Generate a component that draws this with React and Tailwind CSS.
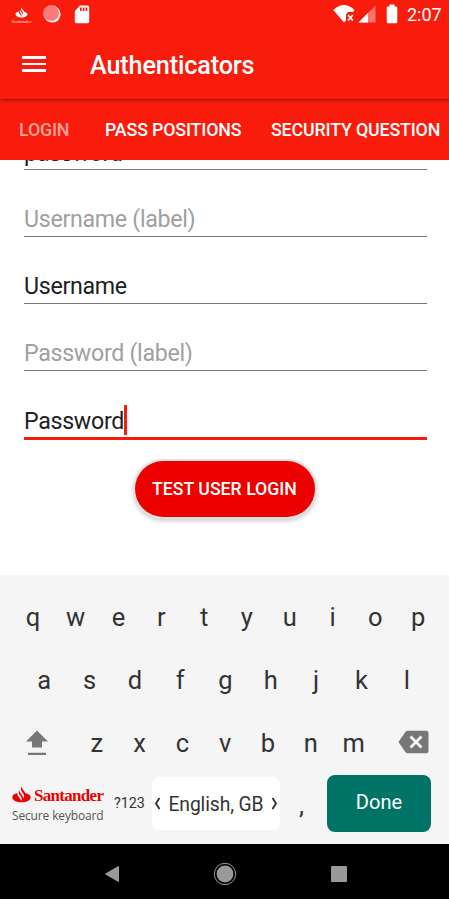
import React from 'react';

function Flame({ className }) {
  return (
    <svg viewBox="0 0 19 17" className={className} fill="currentColor">
      <path d="M13.500 7.200C16.600 7.800 18.700 9.300 18.700 11.200c0 2.900-4.100 5.100-9.200 5.100S.3 14.100.3 11.200c0-1.900 2-3.500 5-4.100 0 1 .2 1.800.7 2.600l2.500 3.600c.4.6.6 1.100.7 1.600.7-1.200.7-2.600 0-3.800L7.200 8.200C6.500 7 6.500 5.500 7.200 4.300c.1.7.3 1.200.6 1.700l2.900 4.200c.5.8.8 1.600.9 2.300.7-1.300.7-2.700 0-3.900L9.500 5C8.700 3.600 8.700 1.900 9.500.5c.1.8.4 1.500.8 2.200l2.200 3.100c.5.6.9 1 1 1.400Z" />
    </svg>
  );
}

function StatusBar() {
  return (
    <div className="flex h-7 shrink-0 items-center pl-3 pr-[8px] text-white">
      <div className="mt-[2px] flex w-[19px] flex-col items-center">
        <Flame className="h-[11px] w-[13px]" />
        <span className="mt-px font-['Liberation_Serif',serif] text-[5px] leading-[5px] text-white/80">Santander</span>
      </div>
      <svg viewBox="0 0 20 20" className="ml-[11px] size-5">
        <circle cx="10.300" cy="10.300" r="8.300" fill="#fff" />
        <circle cx="9.300" cy="9.300" r="7.800" fill="#fb7a78" />
        <circle cx="9.300" cy="9.300" r="8" fill="none" stroke="#fff" strokeOpacity=".6" strokeDasharray="1 1" />
      </svg>
      <svg viewBox="0 0 16 19" className="ml-[12px] h-[19px] w-4">
        <path d="M6 .5h7.500Q15.200.5 15.200 2v14.500q0 1.700-1.700 1.700h-11Q.8 18.200.8 16.500V6Z" fill="#fff" />
        <path d="M6 2.500h1.700v3.500H6zM8.800 2.500h1.700v3.500H8.800zM11.600 2.500h1.700v3.500h-1.700z" fill="#f91c0c" />
      </svg>
      <svg viewBox="0 0 22 18" className="ml-auto h-[18px] w-[22px]">
        <path d="M.3 5Q11-4.800 21.500 5L20 7h-5L13 9.500v6l-2 2Z" fill="#fff" />
        <path d="m15 10 4.800 5.500m0-5.500L15 15.500" stroke="#fff" strokeWidth="1.800" />
      </svg>
      <svg viewBox="0 0 18 18" className="ml-[3px] h-[18px] w-[18px]">
        <path d="M17.500.5v17H.5Z" fill="#fff" fillOpacity=".4" />
        <path d="M10 8v9.500H.5Z" fill="#fff" />
      </svg>
      <svg viewBox="0 0 12 20" className="ml-[10px] h-5 w-3">
        <path d="M3.500.5h5v2H10q1.300 0 1.300 1.300v14q0 1.500-1.300 1.500H2q-1.300 0-1.300-1.500v-14Q.7 2.500 2 2.500h1.500Z" fill="#fff" />
      </svg>
      <span className="ml-[9px] mt-px w-[34px] whitespace-nowrap text-[18px] leading-7">2:07</span>
    </div>
  );
}

function Header() {
  return (
    <header className="relative z-10 flex h-[99px] shrink-0 flex-col bg-[#f91c0c] text-white shadow-[0_1px_3px_rgba(60,0,0,0.55)]">
      <StatusBar />
      <div className="flex h-[71px] items-center pl-[22px] pt-[3px]">
        <div className="mb-[2px] flex w-6 flex-col gap-[4px]">
          <i className="h-[2.600px] bg-white" />
          <i className="h-[2.600px] bg-white" />
          <i className="h-[2.600px] bg-white" />
        </div>
        <h1 className="ml-[44px] mt-[2px] text-[25.200px] font-medium leading-8 tracking-[-0.130px]">Authenticators</h1>
      </div>
    </header>
  );
}

function Tabs() {
  return (
    <nav className="relative flex h-[61px] shrink-0 items-center whitespace-nowrap bg-[#f91c0c] pl-[19px] pt-[2px] text-[17.800px] font-medium tracking-[-0.150px] text-white">
      <span className="w-[86px] text-white/60">LOGIN</span>
      <span className="w-[166px]">PASS POSITIONS</span>
      <span>SECURITY QUESTION</span>
    </nav>
  );
}

function Field({ text, hint }) {
  return (
    <div className="flex h-[67px] shrink-0 items-end border-b border-[#777] pb-[3px]">
      <span className={hint ? 'leading-7 text-[#a0a0a0]' : 'leading-7'}>{text}</span>
    </div>
  );
}

function Form() {
  return (
    <main className="flex h-[415px] shrink-0 flex-col bg-white pl-6 pr-[22px] text-[23.200px] tracking-[-0.300px] text-[#212121]">
      <div className="flex h-[10px] shrink-0 items-end overflow-hidden border-b border-[#777] pb-[2px]">
        <span className="leading-7">password</span>
      </div>
      <Field text="Username (label)" hint />
      <Field text="Username" />
      <Field text="Password (label)" hint />
      <div className="flex h-[68.500px] shrink-0 items-end border-b-3 border-[#f91c0c] pb-[2px]">
        <span className="leading-7">Password</span>
        <i className="h-[30px] w-[2.500px] bg-[#f91c0c]" />
      </div>
      <button className="mt-[21px] h-[56px] w-[180px] shrink-0 translate-x-[-1px] self-center rounded-full bg-[#ec0000] pt-[2px] text-[17.700px] font-medium tracking-normal text-white shadow-[0_0_0_2px_#e2e2e2,0_2px_4px_2px_rgba(0,0,0,0.2)]">
        TEST USER LOGIN
      </button>
    </main>
  );
}

function Keys({ letters }) {
  return letters.split('').map((k) => (
    <span key={k} className="flex-1 text-center text-[25.500px] leading-[62.700px]">{k}</span>
  ));
}

function Keyboard() {
  return (
    <section className="flex h-[269px] shrink-0 flex-col bg-[#f5f5f5] pt-[11px] text-[#333]">
      <div className="flex h-[62.700px] shrink-0 pl-[11.500px] pr-[9.500px]"><Keys letters="qwertyuiop" /></div>
      <div className="flex h-[62.700px] shrink-0 pl-[21.500px] pr-[19.500px]"><Keys letters="asdfghjkl" /></div>
      <div className="flex h-[62.700px] shrink-0 items-center">
        <svg viewBox="0 0 24 26" className="ml-[25px] h-[26px] w-6" fill="#777">
          <path d="M12 .5 23 11.500h-6v6H7v-6H1ZM3 22.700h18V25H3z" />
        </svg>
        <div className="ml-[26.500px] mt-[2px] flex w-[299.500px]"><Keys letters="zxcvbnm" /></div>
        <svg viewBox="0 0 32 24" className="mb-px ml-[22.500px] h-6 w-8">
          <path d="M9.500.7h18.700q2.300 0 2.300 2.300v18q0 2.300-2.300 2.300H9.500q-1.300 0-2-1L.5 12l7-10.300q.7-1 2-1Z" fill="#777" />
          <path d="m12.500 6.500 11 11m0-11-11 11" stroke="#fff" strokeWidth="2.600" />
        </svg>
      </div>
      <div className="flex items-start">
        <div className="ml-3 mt-[9px] w-[102px]">
          <div className="flex items-center text-[#e60505]">
            <Flame className="h-[17px] w-[19px] shrink-0" />
            <span className="ml-[3px] mt-[4px] font-['Liberation_Serif',serif] text-[17px] font-bold leading-[18px] tracking-[-0.700px]">Santander</span>
          </div>
          <div className="mt-[3px] whitespace-nowrap font-['Open_Sans',sans-serif] text-[12px] leading-4 tracking-[-0.150px] text-[#555]">Secure keyboard</div>
        </div>
        <span className="mt-[19px] w-[38px] whitespace-nowrap text-[14.300px] leading-5">?123</span>
        <div className="mt-[3px] flex h-[53px] w-[128px] items-center justify-between rounded-[7px] bg-white px-[2px]">
          <svg viewBox="0 0 7 13" className="h-[13px] w-[7px]"><path d="M5.500 1 2 6.500 5.500 12" fill="none" stroke="#333" strokeWidth="1.900" /></svg>
          <span className="mt-[2px] whitespace-nowrap text-[19.300px] leading-7 tracking-[-0.100px]">English, GB</span>
          <svg viewBox="0 0 7 13" className="h-[13px] w-[7px]"><path d="M1.500 1 5 6.500 1.500 12" fill="none" stroke="#333" strokeWidth="1.900" /></svg>
        </div>
        <span className="ml-[19px] mt-[16px] w-[27.700px] text-[25.500px] leading-[30px]">,</span>
        <button className="mt-px h-[57px] w-[104.500px] rounded-[8px] bg-[#007367] pb-[4px] text-[20px] text-white">Done</button>
      </div>
    </section>
  );
}

function NavBar() {
  return (
    <footer className="flex h-[55px] shrink-0 items-center bg-black pl-[104px] pt-[5px]">
      <svg viewBox="0 0 16 18" className="h-[18px] w-4"><path d="M14.500 1.500v15L1.500 9Z" fill="#999" stroke="#999" strokeLinejoin="round" /></svg>
      <svg viewBox="0 0 24 24" className="ml-[93px] size-6"><circle cx="12" cy="12" r="8.400" fill="#999" /><circle cx="12" cy="12" r="10.700" fill="none" stroke="#999" /></svg>
      <i className="ml-[94px] size-[16px] rounded-[1px] bg-[#999]" />
    </footer>
  );
}

export default function App() {
  return (
    <div className="flex h-[899px] w-[449px] flex-col overflow-hidden bg-white font-['Roboto',sans-serif]">
      <Header />
      <Tabs />
      <Form />
      <Keyboard />
      <NavBar />
    </div>
  );
}
